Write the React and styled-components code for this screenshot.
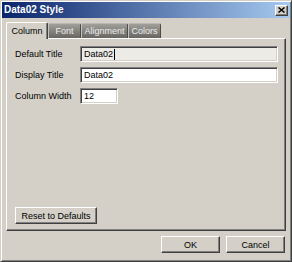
import React from "react";
import styled, { createGlobalStyle } from "styled-components";

const Global = createGlobalStyle`
  html, body { margin: 0; padding: 0; background: #d4d0c8; }
  body { font-family: "Liberation Sans", Arial, sans-serif; }
`;

const Window = styled.div`
  box-sizing: border-box;
  width: 292px;
  height: 262px;
  display: flex;
  flex-direction: column;
  background: #d4d0c8;
  border: 1px solid;
  border-color: #d4d0c8 #404040 #404040 #d4d0c8;
  box-shadow: inset 1px 1px #ffffff, inset -1px -1px #808080;
  padding: 1px;
`;

const TitleBar = styled.div`
  height: 16px;
  flex: none;
  display: flex;
  align-items: center;
  justify-content: space-between;
  background: linear-gradient(to right, #0a246a, #a6caf0);
  padding: 0 2px 0 2px;
`;

const Title = styled.span`
  color: #ffffff;
  font-weight: bold;
  font-size: 10px;
  line-height: 16px;
  white-space: nowrap;
`;

const CloseButton = styled.div`
  box-sizing: border-box;
  width: 13px;
  height: 11px;
  background: #d4d0c8;
  border: 1px solid;
  border-color: #ffffff #404040 #404040 #ffffff;
  box-shadow: inset -1px -1px #808080;
  display: flex;
  align-items: center;
  justify-content: center;
`;

const Body = styled.div`
  flex: 1;
  display: flex;
  flex-direction: column;
  padding: 4px 4px 7px 4px;
  min-height: 0;
`;

const TabRow = styled.div`
  display: flex;
  align-items: flex-end;
  height: 16px;
  position: relative;
  z-index: 1;
`;

const Tab = styled.div`
  box-sizing: border-box;
  width: ${(p) => p.$w}px;
  font-size: 9px;
  display: flex;
  align-items: center;
  justify-content: center;
  white-space: nowrap;
  border-radius: 2px 2px 0 0;
  ${(p) =>
    p.$active
      ? `
    height: 17px;
    margin-bottom: -1px;
    background: #d4d0c8;
    color: #000;
    border-top: 1px solid #ffffff;
    border-left: 1px solid #ffffff;
    border-right: 1px solid #404040;
    box-shadow: inset -1px 0 #808080;
    padding-bottom: 1px;
  `
      : `
    height: 15px;
    background: linear-gradient(#a19f9a, #676662);
    color: #ececec;
    border-top: 1px solid #b9b7b1;
    border-left: 1px solid #c4c2bc;
    border-right: 1px solid #4c4b48;
  `}
`;

const Panel = styled.div`
  box-sizing: border-box;
  flex: 1;
  display: flex;
  flex-direction: column;
  border: 1px solid;
  border-color: #ffffff #404040 #404040 #ffffff;
  box-shadow: inset -1px -1px #808080;
  padding: 7px 7px 6px 8px;
`;

const Rows = styled.div`
  display: flex;
  flex-direction: column;
  gap: 5px;
`;

const Row = styled.div`
  display: flex;
  align-items: center;
  height: 16px;
`;

const Label = styled.div`
  width: 65px;
  flex: none;
  font-size: 9px;
  color: #000;
  white-space: nowrap;
`;

const Field = styled.div`
  box-sizing: border-box;
  width: ${(p) => p.$w}px;
  height: 16px;
  background: ${(p) => p.$bg || "#ffffff"};
  border: 1px solid;
  border-color: #808080 #ffffff #ffffff #808080;
  box-shadow: inset 1px 1px #404040, inset -1px -1px #d4d0c8;
  padding: 0 3px;
  display: flex;
  align-items: center;
  font-size: 9px;
  color: #000;
`;

const Caret = styled.span`
  display: inline-block;
  width: 1px;
  height: 11px;
  background: #000;
  margin-left: 1px;
`;

const Button = styled.div`
  box-sizing: border-box;
  width: ${(p) => p.$w}px;
  height: ${(p) => p.$h}px;
  background: #d4d0c8;
  border: 1px solid;
  border-color: #ffffff #404040 #404040 #ffffff;
  box-shadow: inset -1px -1px #808080;
  font-size: 9px;
  color: #000;
  display: flex;
  align-items: center;
  justify-content: center;
  white-space: nowrap;
`;

const PanelFooter = styled.div`
  margin-top: auto;
  display: flex;
`;

const Footer = styled.div`
  margin-top: 5px;
  display: flex;
  justify-content: flex-end;
  gap: 6px;
  padding-right: 1px;
`;

export default function App() {
  return (
    <>
      <Global />
      <Window>
        <TitleBar>
          <Title>Data02 Style</Title>
          <CloseButton>
            <svg width="7" height="6" viewBox="0 0 7 6">
              <path d="M0.5 0.5 L6.5 5.5 M6.5 0.5 L0.5 5.5" stroke="#000" strokeWidth="1.5" />
            </svg>
          </CloseButton>
        </TitleBar>
        <Body>
          <TabRow>
            <Tab $active $w={42}>Column</Tab>
            <Tab $w={33}>Font</Tab>
            <Tab $w={47}>Alignment</Tab>
            <Tab $w={33}>Colors</Tab>
          </TabRow>
          <Panel>
            <Rows>
              <Row>
                <Label>Default Title</Label>
                <Field $w={198} $bg="#ecebe6">
                  Data02
                  <Caret />
                </Field>
              </Row>
              <Row>
                <Label>Display Title</Label>
                <Field $w={198}>Data02</Field>
              </Row>
              <Row>
                <Label>Column Width</Label>
                <Field $w={38}>12</Field>
              </Row>
            </Rows>
            <PanelFooter>
              <Button $w={82} $h={17}>Reset to Defaults</Button>
            </PanelFooter>
          </Panel>
          <Footer>
            <Button $w={59} $h={17}>OK</Button>
            <Button $w={59} $h={17}>Cancel</Button>
          </Footer>
        </Body>
      </Window>
    </>
  );
}
